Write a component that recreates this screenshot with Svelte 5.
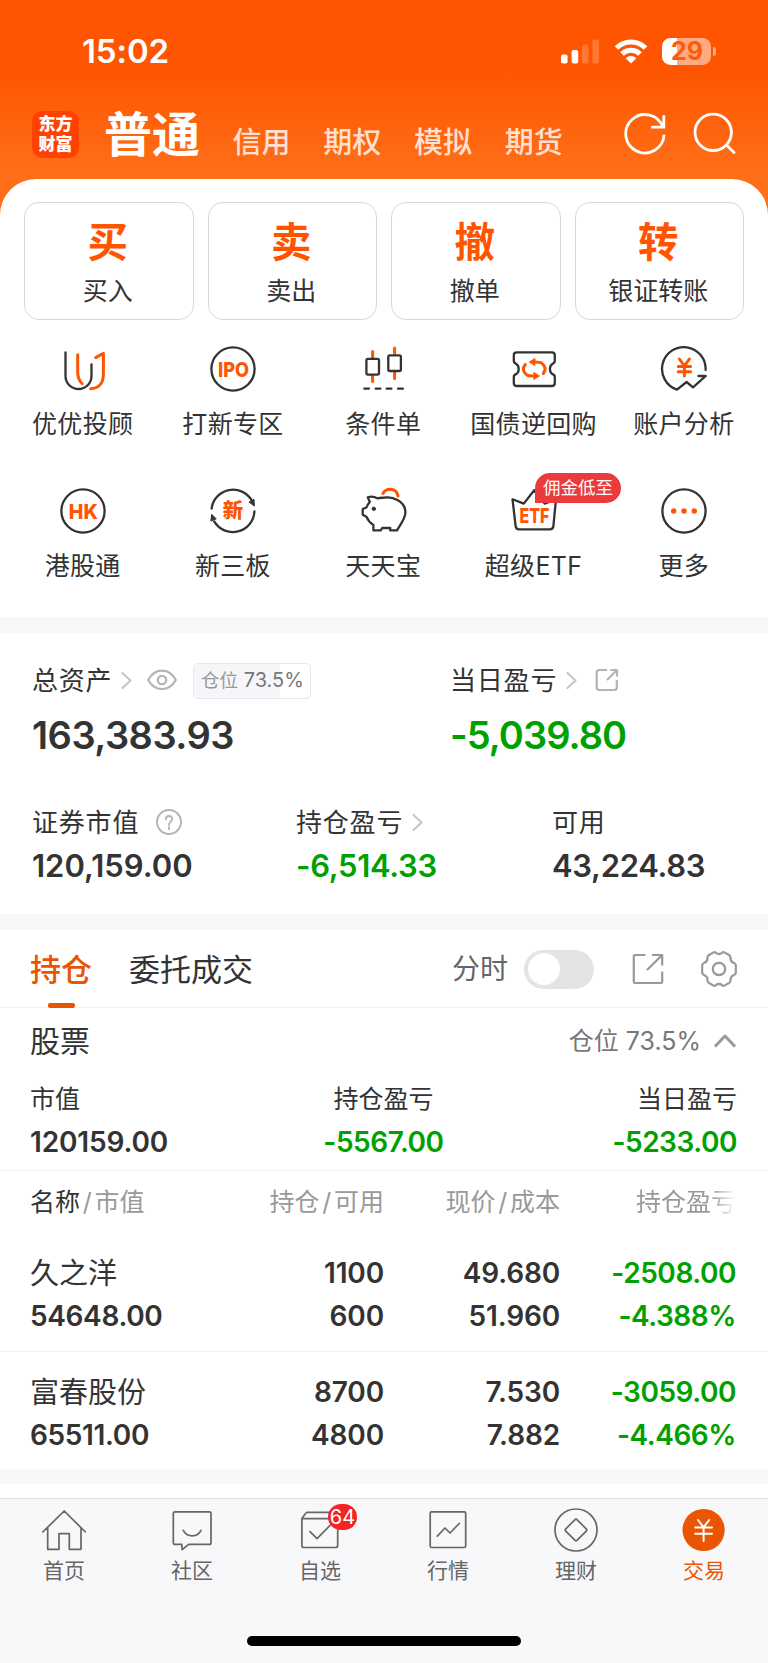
<script lang="ts">
  const accounts = ["信用", "期权", "模拟", "期货"];

  const actions = [
    { mark: "买", label: "买入" },
    { mark: "卖", label: "卖出" },
    { mark: "撤", label: "撤单" },
    { mark: "转", label: "银证转账" },
  ];

  const shortcuts = [
    { icon: "advisor", label: "优优投顾" },
    { icon: "ipo", label: "打新专区" },
    { icon: "candles", label: "条件单" },
    { icon: "repo", label: "国债逆回购" },
    { icon: "analysis", label: "账户分析" },
    { icon: "hk", label: "港股通" },
    { icon: "neeq", label: "新三板" },
    { icon: "piggy", label: "天天宝" },
    { icon: "etf", label: "超级ETF", tag: "佣金低至" },
    { icon: "more", label: "更多" },
  ];

  const holdings = [
    {
      name: "久之洋",
      value: "54648.00",
      held: "1100",
      usable: "600",
      price: "49.680",
      cost: "51.960",
      profit: "-2508.00",
      rate: "-4.388%",
    },
    {
      name: "富春股份",
      value: "65511.00",
      held: "8700",
      usable: "4800",
      price: "7.530",
      cost: "7.882",
      profit: "-3059.00",
      rate: "-4.466%",
    },
  ];

  const tabs = [
    { icon: "home", label: "首页" },
    { icon: "community", label: "社区" },
    { icon: "watchlist", label: "自选", count: 64 },
    { icon: "market", label: "行情" },
    { icon: "wealth", label: "理财" },
    { icon: "trade", label: "交易", active: true },
  ];

  const position = 73.5;
  let intraday = $state(false);
</script>

{#snippet arrow()}
  <svg class="arrow" width="11" height="17" viewBox="0 0 11 17">
    <path d="M1.5 1L9.5 8.5L1.5 16" />
  </svg>
{/snippet}

{#snippet shortcutIcon(name: string)}
  <svg class="glyph" width="48" height="48" viewBox="0 0 48 48">
    {#if name === "advisor"}
      <path d="M6.5 7.5V31a13 13 0 0 0 26 0V19.5" />
      <path class="hot" d="M18.7 9.8V27C18.7 32 20.2 35.8 23.2 38.8M36.7 12.6L44.4 8.4V29C44.4 38 40 43.5 31.7 43.7" />
    {:else if name === "ipo"}
      <circle cx="24" cy="24" r="21.6" />
      <text x="24.5" y="31.6" font-size="20.5" textLength="31" lengthAdjust="spacingAndGlyphs">IPO</text>
    {:else if name === "candles"}
      <path class="hot" d="M12.6 6.5V13M12.6 31V36.5M34.6 3V9M34.6 27V33.5" />
      <rect x="6.4" y="13.9" width="12.6" height="15.7" rx="1.5" />
      <rect x="28.3" y="10.3" width="12.6" height="15.7" rx="1.5" />
      <path d="M4.4 43.7H8.9M15.7 43.7H20.4M26.7 43.7H31.4M38 43.7H42.9" />
    {:else if name === "repo"}
      <path
        d="M6.8 7.3H41.8Q44.8 7.3 44.8 10.3V15.6Q44.8 18 42.6 18.8C39 21 39 27 42.6 29.2Q44.8 30 44.8 32.4V38Q44.8 41 41.8 41H6.8Q3.8 41 3.8 38V32.4Q3.8 30 6 29.2C9.6 27 9.6 21 6 18.8Q3.8 18 3.8 15.6V10.3Q3.8 7.3 6.8 7.3Z"
      />
      <path class="hot" d="M15.3 19.5Q11 25 16.5 29.7Q18.5 31 24 31M33.3 28.5Q37.6 23 32 18.3Q30 17 24.5 17" />
      <path class="fill" d="M18.5 17L25.3 12.7V21.3ZM30.2 31L23.4 26.7V35.3Z" />
    {:else if name === "analysis"}
      <path d="M45.6 25A21.8 21.8 0 1 0 17 44.6L26.6 37L33 42.3L45.7 31H38.5" />
      <path class="hot" d="M19.4 14L24.4 21L29.4 14M18.2 21.5H30.6M18.2 26.8H30.6M24.4 21V31" />
    {:else if name === "hk"}
      <circle cx="24" cy="24" r="21.6" />
      <text x="24.3" y="31.6" font-size="20.5" textLength="29" lengthAdjust="spacingAndGlyphs">HK</text>
    {:else if name === "neeq"}
      <path d="M2.6 21.5A21.6 21.6 0 0 1 42.8 13.6M45.4 24.5A21.6 21.6 0 0 1 5.2 34.4" />
      <path class="solid" d="M40.3 14.9L45 12.3L45.3 18.7ZM1.9 33.7L2.7 27.3L7 31.7Z" />
      <text x="24" y="31.2" font-size="20.5">新</text>
    {:else if name === "piggy"}
      <path
        d="M25.2 10.5C32.2 9.4 45.5 14 45.4 25.5C45.3 32 40.2 37.5 37 43.4H30.2V41H22.2L20.7 43.4H13.4V38C10.2 36 7.7 33 6.4 29.7L2.7 27.7V22L6.4 20.5C7 18.5 8.2 16.8 9.8 15L7.8 10.3C11.2 9 14.7 9.7 17.4 11.3C20 10.8 22.7 10.8 25.2 10.5Z"
      />
      <path class="hot" d="M22.9 6.5C26.2 1 36.2 0 38 9" />
      <circle class="solid" cx="13.8" cy="21.8" r="1.7" />
    {:else if name === "etf"}
      <path d="M2.5 12.3L13.8 16.6L24.2 3.2L34.6 16.6L46 12.3L43.4 38.8Q43 42.3 40 42.3H9Q6 42.3 5.6 38.8Z" />
      <text x="24.4" y="35.5" font-size="20.5" textLength="30" lengthAdjust="spacingAndGlyphs">ETF</text>
    {:else}
      <circle cx="24" cy="24" r="21.6" />
      <path
        class="fill"
        d="M11 24a2.7 2.7 0 1 0 5.4 0a2.7 2.7 0 1 0-5.4 0M21.3 24a2.7 2.7 0 1 0 5.4 0a2.7 2.7 0 1 0-5.4 0M31.6 24a2.7 2.7 0 1 0 5.4 0a2.7 2.7 0 1 0-5.4 0"
      />
    {/if}
  </svg>
{/snippet}

{#snippet tabIcon(name: string)}
  <svg class="tab-icon" width="44" height="44" viewBox="0 0 44 44">
    {#if name === "home"}
      <path d="M.8 24L22.2 3L43.4 24M5.7 19.8V41.3H17V25.7H27.3V41.3H39V19.8" />
    {:else if name === "community"}
      <path d="M5 3.8H39.3Q41 3.8 41 5.5V34.7Q41 36.4 39.3 36.4H18.7L12.2 41.6L11.7 36.4H5Q3.3 36.4 3.3 34.7V5.5Q3.3 3.8 5 3.8ZM13.3 22.3Q16 27.8 22.2 27.8T31 22.3" />
    {:else if name === "watchlist"}
      <path d="M3.9 10.7H39.7V37.5Q39.7 39.5 37.7 39.5H5.9Q3.9 39.5 3.9 37.5V10.2L8.7 4.3H35L39.7 10.7M12 23.7L19 30.7L33 16.5" />
    {:else if name === "market"}
      <rect x="4.2" y="3.9" width="35.5" height="35.6" rx="1.5" />
      <path d="M11.3 28.2L19 20L24 25L33.3 15.5" />
    {:else if name === "wealth"}
      <circle cx="22" cy="22" r="21" />
      <path d="M20.8 11.8Q22 10.6 23.2 11.8L32.2 20.8Q33.4 22 32.2 23.2L23.2 32.2Q22 33.4 20.8 32.2L11.8 23.2Q10.6 22 11.8 20.8Z" />
    {:else}
      <circle class="disc" cx="21.6" cy="22" r="21.1" />
      <path class="coin" d="M16 12L21.6 19.3L27.2 12M13.2 19.5H30M13.2 25.7H30M21.6 19.3V33" />
    {/if}
  </svg>
{/snippet}

<div class="app">
  <header>
    <div class="status">
      <span class="time">15:02</span>
      <div class="signals">
        <svg class="bars" width="39" height="25" viewBox="0 0 39 25">
          <rect y="15.5" width="6.6" height="9" rx="2" />
          <rect x="10.6" y="11" width="6.6" height="13.5" rx="2" />
          <rect x="21" y="5.5" width="6.6" height="19" rx="2" opacity=".2" />
          <rect x="31.4" y="0.5" width="6.6" height="24" rx="2" opacity=".2" />
        </svg>
        <svg class="wifi" width="34" height="25" viewBox="0 0 34 25">
          <path d="M2.5 9A20.5 20.5 0 0 1 31.5 9" />
          <path d="M8 15A12.7 12.7 0 0 1 26 15" />
          <path class="dot" d="M11.7 19.2A7.6 7.6 0 0 1 22.3 19.2L17 24.4Z" />
        </svg>
        <div class="battery">29</div>
      </div>
    </div>
    <nav class="accounts">
      <div class="logo"><span>东方</span><span>财富</span></div>
      <h1>普通</h1>
      <ul>
        {#each accounts as account}
          <li>{account}</li>
        {/each}
      </ul>
      <svg class="tool" width="44" height="44" viewBox="0 0 44 44">
        <path d="M39 15.3A19.2 19.2 0 1 0 40.1 22.8M39.8 3.2V15.2H27.2" />
      </svg>
      <svg class="tool" width="44" height="44" viewBox="0 0 44 44">
        <circle cx="21.2" cy="20.3" r="18.2" />
        <path d="M34 32.5L42.8 41.3" />
      </svg>
    </nav>
  </header>

  <section class="panel">
    <div class="actions">
      {#each actions as action}
        <button>
          <strong>{action.mark}</strong>
          <span>{action.label}</span>
        </button>
      {/each}
    </div>
    <div class="shortcuts">
      {#each shortcuts as item}
        <div class="shortcut">
          {@render shortcutIcon(item.icon)}
          {#if item.tag}<em>{item.tag}</em>{/if}
          <span>{item.label}</span>
        </div>
      {/each}
    </div>
  </section>

  <section class="assets">
    <div class="totals">
      <div>
        <div class="caption">
          <span>总资产</span>
          {@render arrow()}
          <svg class="eye" width="30" height="22" viewBox="0 0 30 22">
            <path d="M1.2 11C8-1.5 22-1.5 28.8 11C22 23 8 23 1.2 11Z" />
            <circle cx="15" cy="11" r="4.2" />
          </svg>
          <div class="ratio">
            <i style="width: {position}%"></i>
            <b>仓位</b> {position}%
          </div>
        </div>
        <p class="total">163,383.93</p>
      </div>
      <div>
        <div class="caption">
          <span>当日盈亏</span>
          {@render arrow()}
          <svg class="share" width="24" height="24" viewBox="0 0 24 24">
            <path d="M12 2H4.5Q1.7 2 1.7 4.8V19.2Q1.7 22 4.5 22H19Q21.8 22 21.8 19.2V12M15.5 2H22V8.5M21.5 2.5L12 12" />
          </svg>
        </div>
        <p class="total down">-5,039.80</p>
      </div>
    </div>
    <div class="details">
      <div>
        <div class="caption">
          <span>证券市值</span>
          <svg class="help" width="26" height="26" viewBox="0 0 26 26">
            <circle cx="13" cy="13" r="12" />
            <path d="M9.8 10.3C9.8 6 16.2 6 16.2 10C16.2 12.6 13 12.7 13 16M13 18.3V20.3" />
          </svg>
        </div>
        <p>120,159.00</p>
      </div>
      <div>
        <div class="caption"><span>持仓盈亏</span>{@render arrow()}</div>
        <p class="down">-6,514.33</p>
      </div>
      <div>
        <div class="caption"><span>可用</span></div>
        <p>43,224.83</p>
      </div>
    </div>
  </section>

  <section class="book">
    <div class="book-tabs">
      <span class="current">持仓</span>
      <span>委托成交</span>
      <label>
        分时
        <input type="checkbox" bind:checked={intraday} />
        <span class="switch"></span>
      </label>
      <svg class="grey" width="32" height="32" viewBox="0 0 32 32">
        <path d="M13.5 2H3Q1.8 2 1.8 3.2V28.8Q1.8 30 3 30H29Q30.2 30 30.2 28.8V18.5M20 2H30.2V12.5M29.7 2.5L15 17" />
      </svg>
      <svg class="grey gear" width="38" height="38" viewBox="0 0 38 38">
        <path
          d="M13.2 2.6Q14.6 1.6 16 2.8Q19 5.2 22 2.8Q23.4 1.6 24.8 2.6L29 5Q30.6 6 30.5 7.8Q30.3 11.6 33.5 12.8Q35.4 13.5 35.8 15V23Q35.4 24.5 33.5 25.2Q30.3 26.4 30.5 30.2Q30.6 32 29 33L24.8 35.4Q23.4 36.4 22 35.2Q19 32.8 16 35.2Q14.6 36.4 13.2 35.4L9 33Q7.4 32 7.5 30.2Q7.7 26.4 4.5 25.2Q2.6 24.5 2.2 23V15Q2.6 13.5 4.5 12.8Q7.7 11.6 7.5 7.8Q7.4 6 9 5Z"
        />
        <circle cx="19" cy="19" r="6.2" />
      </svg>
    </div>

    <div class="group">
      <h2>股票</h2>
      <span>仓位 {position}%</span>
      <svg class="grey" width="24" height="16" viewBox="0 0 24 16">
        <path d="M2 13.5L12 3L22 13.5" />
      </svg>
    </div>
    <div class="summary">
      <div><span>市值</span><b>120159.00</b></div>
      <div><span>持仓盈亏</span><b class="down">-5567.00</b></div>
      <div><span>当日盈亏</span><b class="down">-5233.00</b></div>
    </div>

    <div class="row head">
      <span><b>名称</b><i>/</i>市值</span>
      <span>持仓<i>/</i>可用</span>
      <span>现价<i>/</i>成本</span>
      <span class="fade">持仓盈亏</span>
    </div>
    {#each holdings as stock}
      <div class="row stock">
        <div><span>{stock.name}</span><b>{stock.value}</b></div>
        <div><b>{stock.held}</b><b>{stock.usable}</b></div>
        <div><b>{stock.price}</b><b>{stock.cost}</b></div>
        <div class="down"><b>{stock.profit}</b><b>{stock.rate}</b></div>
      </div>
    {/each}
  </section>

  <footer>
    <nav>
      {#each tabs as tab}
        <div class="tab" class:active={tab.active}>
          {@render tabIcon(tab.icon)}
          {#if tab.count}<em>{tab.count}</em>{/if}
          <span>{tab.label}</span>
        </div>
      {/each}
    </nav>
    <div class="home-bar"></div>
  </footer>
</div>

<style>
  :global(body) {
    background: #fff;
  }

  .app {
    width: 768px;
    height: 1663px;
    display: flex;
    flex-direction: column;
    overflow: hidden;
    background: #fff;
    color: #333;
    font-family: Inter, "Noto Sans CJK SC", sans-serif;
  }

  h1,
  h2,
  p,
  ul {
    margin: 0;
    padding: 0;
    list-style: none;
  }

  em,
  i {
    font-style: normal;
  }

  svg {
    display: block;
    flex: none;
    fill: none;
    stroke-linecap: round;
    stroke-linejoin: round;
  }

  .down {
    color: #00a000;
  }

  header {
    height: 223px;
    flex: none;
    box-sizing: border-box;
    margin-bottom: -44px;
    background: linear-gradient(#ff5500 72px, #ff6e18 170px);
    color: #fff;
  }

  .status {
    display: flex;
    justify-content: space-between;
    align-items: center;
    height: 102px;
    padding: 0 57px 0 82px;
  }

  .time {
    font-size: 33px;
    font-weight: 600;
    letter-spacing: -0.1px;
  }

  .signals {
    display: flex;
    align-items: center;
    gap: 14px;
  }

  .bars {
    fill: #fff;
  }

  .wifi {
    stroke: #fff;
    stroke-width: 5;
    stroke-linecap: butt;
  }

  .wifi .dot {
    fill: #fff;
    stroke: none;
  }

  .battery {
    position: relative;
    box-sizing: border-box;
    width: 49px;
    height: 27px;
    padding-left: 1px;
    border-radius: 8.5px;
    background: linear-gradient(90deg, #fff 15px, #ffaa80 15px);
    color: #ff5a08;
    font-size: 25px;
    font-weight: 700;
    line-height: 27px;
    text-align: center;
  }

  .battery::after {
    content: "";
    position: absolute;
    left: 51px;
    top: 9px;
    width: 3px;
    height: 9px;
    border-radius: 0 5px 5px 0;
    background: #ffaa80;
  }

  .accounts {
    display: flex;
    align-items: center;
    height: 64px;
    padding: 0 32px 0 32px;
  }

  .logo {
    display: flex;
    flex-direction: column;
    justify-content: center;
    width: 47px;
    height: 47px;
    border-radius: 10px;
    background: #ff4200;
    font-size: 17px;
    font-weight: 900;
    line-height: 20px;
    text-align: center;
  }

  h1 {
    margin-left: 25px;
    padding-top: 2px;
    font-size: 48px;
    font-weight: 700;
    line-height: 64px;
  }

  ul {
    display: flex;
    flex: 1;
    gap: 32.7px;
    margin-left: 32.5px;
    padding-top: 17px;
    color: #ffe0d0;
    font-size: 29px;
    font-weight: 500;
    line-height: 40px;
  }

  .tool {
    margin-left: 24px;
    stroke: #fff;
    stroke-width: 2.8;
    stroke-linecap: butt;
    stroke-linejoin: miter;
  }

  .panel {
    height: 438px;
    flex: none;
    box-sizing: border-box;
    padding: 23px 24px 0;
    border-radius: 36px 36px 0 0;
    background: #fff;
  }

  .actions {
    display: grid;
    grid-template-columns: repeat(4, 1fr);
    gap: 14px;
  }

  button {
    display: flex;
    flex-direction: column;
    align-items: center;
    height: 118px;
    padding: 10px 2px 0 0;
    border: 1px solid #d8d8d8;
    border-radius: 15px;
    background: #fff;
    color: inherit;
    font-family: inherit;
  }

  button strong {
    color: #ff5500;
    font-size: 40.5px;
    font-weight: 700;
    line-height: 59px;
  }

  button span {
    font-size: 25px;
    line-height: 39px;
  }

  .shortcuts {
    display: grid;
    grid-template-columns: repeat(5, 150.3px);
    grid-auto-rows: 142px;
    margin: 25px -16px 0;
  }

  .shortcut {
    position: relative;
    display: flex;
    flex-direction: column;
    align-items: center;
    font-size: 25px;
    letter-spacing: 0.3px;
    line-height: 36px;
  }

  .shortcut svg {
    margin-bottom: 13px;
  }

  .shortcut span {
    padding-right: 1px;
  }

  .shortcut em {
    position: absolute;
    left: 76px;
    top: -14px;
    width: 86px;
    height: 30px;
    border-radius: 15px 15px 15px 0;
    background: #eb3a3d;
    color: #fff;
    font-size: 17.5px;
    letter-spacing: 0;
    line-height: 30px;
    text-align: center;
  }

  .glyph {
    stroke: #333;
    stroke-width: 2.3;
  }

  .glyph .hot {
    stroke: #ff5500;
    stroke-width: 3;
  }

  .glyph .fill,
  .glyph text {
    fill: #ff5500;
    stroke: none;
  }

  .glyph .solid {
    fill: #333;
    stroke-width: 1;
  }

  .glyph text {
    font-weight: 800;
    letter-spacing: 0;
    text-anchor: middle;
  }

  .assets {
    flex: none;
    height: 281px;
    border: solid #f5f7f9;
    border-width: 16px 0;
  }

  .totals {
    display: grid;
    grid-template-columns: 418px 1fr;
    padding: 27px 0 0 32px;
  }

  .caption {
    display: flex;
    align-items: center;
    height: 40px;
    font-size: 26px;
    letter-spacing: 0.8px;
  }

  .caption span {
    padding-bottom: 3px;
  }

  .arrow {
    margin-left: 8.5px;
    stroke: #c4c4c4;
    stroke-width: 2;
  }

  .eye,
  .share,
  .help {
    stroke: #b4b4b4;
    stroke-width: 2.2;
  }

  .eye {
    margin-left: 15px;
  }

  .share {
    margin-left: 18px;
    stroke-linecap: butt;
  }

  .help {
    margin-left: 17px;
    stroke-width: 1.9;
  }

  .ratio {
    position: relative;
    z-index: 0;
    box-sizing: border-box;
    width: 118px;
    height: 36px;
    margin: 2px 0 0 16.5px;
    border: 1.5px solid #e6e7ec;
    border-radius: 5px;
    overflow: hidden;
    color: #777;
    font-size: 20px;
    letter-spacing: 0;
    line-height: 33px;
    text-align: center;
    white-space: nowrap;
  }

  .ratio i {
    position: absolute;
    z-index: -1;
    inset: 0 auto 0 0;
    background: #f6f6fa;
  }

  .ratio b {
    color: #999;
    font-size: 18.5px;
    font-weight: 400;
  }

  .total {
    font-size: 38px;
    font-weight: 600;
    letter-spacing: -0.5px;
    line-height: 70px;
  }

  .total.down {
    letter-spacing: -0.95px;
  }

  .details {
    display: grid;
    grid-template-columns: 264px 256px 1fr;
    padding: 32px 0 0 32px;
  }

  .details p {
    font-size: 31px;
    font-weight: 600;
    line-height: 48px;
  }

  .details div + div p {
    letter-spacing: -0.3px;
  }

  .book {
    flex: none;
    height: 554px;
    box-sizing: border-box;
    border-bottom: 15px solid #f5f7f9;
  }

  .book-tabs {
    display: flex;
    align-items: center;
    height: 78px;
    box-sizing: border-box;
    padding: 1px 30px 0;
    border-bottom: 1px solid #f2f2f2;
    font-size: 31px;
    line-height: 77px;
  }

  .current {
    position: relative;
    margin-right: 37px;
    color: #ea5504;
    font-weight: 500;
  }

  .current::after {
    content: "";
    position: absolute;
    left: 17.5px;
    bottom: 0;
    width: 27px;
    height: 5px;
    border-radius: 2px;
    background: #ea5504;
  }

  label {
    display: flex;
    align-items: center;
    margin-left: auto;
    color: #666;
    font-size: 28px;
  }

  input {
    display: none;
  }

  .switch {
    width: 70px;
    height: 39px;
    box-sizing: border-box;
    margin: 0 38px 0 16px;
    padding: 3.5px;
    border-radius: 20px;
    background: #e4e4e6;
  }

  .switch::before {
    content: "";
    display: block;
    width: 32px;
    height: 32px;
    border-radius: 50%;
    background: #fff;
  }

  input:checked + .switch {
    background: #ea5504;
  }

  input:checked + .switch::before {
    margin-left: auto;
  }

  .grey {
    stroke: #999;
    stroke-width: 2.2;
    stroke-linecap: butt;
  }

  .gear {
    margin-left: 36px;
  }

  .group {
    display: flex;
    align-items: center;
    height: 66px;
    padding: 0 31px 0 30px;
    color: #777;
    font-size: 25px;
  }

  .group span,
  h2 {
    padding-bottom: 4px;
  }

  h2 {
    flex: 1;
    color: #333;
    font-size: 30px;
    font-weight: 400;
  }

  .group svg {
    margin-left: 12px;
    stroke-width: 3;
  }

  .summary {
    display: grid;
    grid-template-columns: repeat(3, 1fr);
    height: 97px;
    box-sizing: border-box;
    padding: 4px 31px 0 30px;
    border-bottom: 1.5px solid #f0f0f0;
  }

  .summary div {
    display: flex;
    flex-direction: column;
    align-items: center;
    font-size: 25px;
    line-height: 42.5px;
  }

  .summary div:first-child {
    align-items: flex-start;
  }

  .summary div:last-child {
    align-items: flex-end;
  }

  .summary b,
  .stock b {
    font-size: 28px;
    font-weight: 600;
    letter-spacing: -0.15px;
  }

  .summary .down,
  .stock .down b {
    letter-spacing: -0.45px;
  }

  .row {
    display: grid;
    grid-template-columns: 178px repeat(3, 176px);
    padding-left: 30px;
    text-align: right;
  }

  .row > :first-child {
    text-align: left;
  }

  .head {
    color: #999;
    font-size: 25px;
    line-height: 63px;
    height: 62px;
  }

  .head b {
    color: #333;
    font-weight: 400;
  }

  .head i {
    padding: 0 2.7px;
  }

  .fade {
    mask-image: linear-gradient(90deg, #000 150px, transparent 176px);
  }

  .stock {
    height: 118px;
    box-sizing: border-box;
    padding-top: 19px;
    line-height: 43px;
  }

  .stock + .stock {
    border-top: 1px solid #f2f2f2;
  }

  .stock > div {
    display: flex;
    flex-direction: column;
  }

  .stock > :first-child b {
    letter-spacing: -0.35px;
  }

  .stock span {
    font-size: 29px;
  }

  footer {
    margin-top: 14px;
    flex: 1;
    display: flex;
    flex-direction: column;
    border-top: 1px solid #dedee2;
    background: #f8f8fb;
  }

  footer nav {
    display: grid;
    grid-template-columns: repeat(6, 128px);
    padding-top: 9px;
  }

  .tab {
    position: relative;
    display: flex;
    flex-direction: column;
    align-items: center;
    color: #666;
    font-size: 21px;
    line-height: 38px;
  }

  .tab-icon {
    stroke: #666;
    stroke-width: 1.7;
  }

  .disc {
    fill: #ea5504;
    stroke: none;
  }

  .coin {
    stroke: #fff;
    stroke-width: 2;
  }

  .active {
    color: #ea5504;
  }

  .tab em {
    position: absolute;
    left: 72px;
    top: -4px;
    width: 29px;
    height: 26px;
    border-radius: 13px;
    background: #f52323;
    color: #fff;
    font-size: 20px;
    line-height: 27px;
    text-align: center;
  }

  .home-bar {
    width: 274px;
    height: 10px;
    margin: auto auto 17px;
    border-radius: 5px;
    background: #000;
  }
</style>
